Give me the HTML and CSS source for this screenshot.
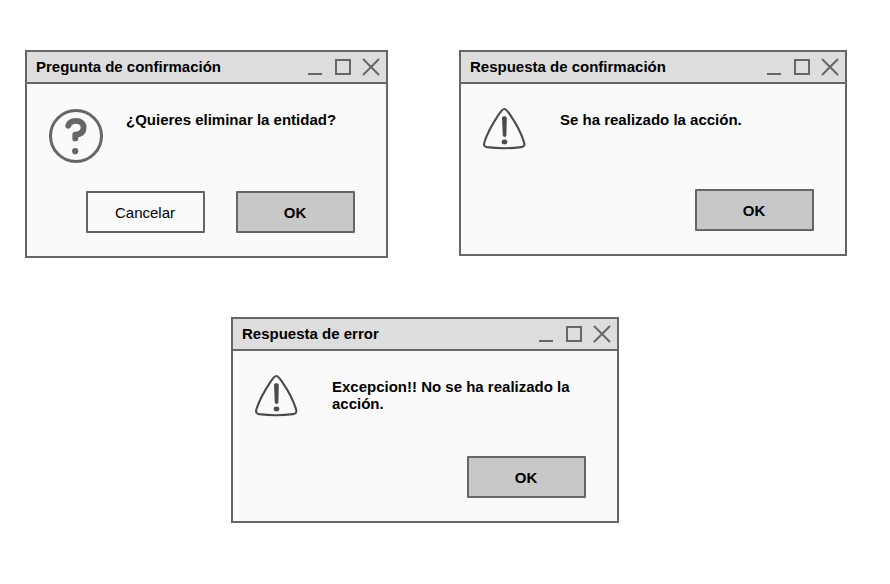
FILE: index.html
```html
<!DOCTYPE html>
<html lang="es">
<head>
<meta charset="utf-8">
<title>Diálogos</title>
<link rel="stylesheet" href="styles.css">
</head>
<body>
<svg width="0" height="0" class="defs" aria-hidden="true">
  <symbol id="controls" viewBox="0 0 76 30">
    <path d="M2 22h14M30 8h14v14h-14z" fill="none" stroke="#666" stroke-width="2"/>
    <path d="M57.5 7.5l15 15M72.5 7.5l-15 15" fill="none" stroke="#666" stroke-width="2" stroke-linecap="round"/>
  </symbol>
  <symbol id="warning" viewBox="0 0 44 44">
    <path d="M22.3 2C20.6 2 18.9 4.2 16.6 7.6C10.8 16.4 5.2 26.2 2.4 35.2C1.6 38.2 2 39.6 5 40.1C15 41.4 29 41.4 39 40.1C42 39.7 43 38.4 42.1 35.4C39.2 26 33.4 15.4 27.8 7.4C25.6 4.2 24 2 22.3 2Z" fill="none" stroke="#4b4b4b" stroke-width="2.1"/>
    <path d="M20 10.8C20 8.7 24.8 8.7 24.8 10.8L24.4 28.6C24.3 30.3 21 30.3 20.8 28.6Z" fill="#4b4b4b"/>
    <ellipse cx="22.5" cy="34.9" rx="2.8" ry="2.4" fill="#4b4b4b"/>
  </symbol>
</svg>
<main class="board">
  <section class="dialog confirm">
    <header class="titlebar"><h2>Pregunta de confirmación</h2><svg class="controls"><use href="#controls"/></svg></header>
    <div class="content">
      <svg class="question" viewBox="0 0 54 54">
        <circle cx="27" cy="27" r="25.5" fill="none" stroke="#666" stroke-width="3"/>
        <path d="M19.3 16.6C20.3 13.4 23 11.9 26.8 11.9C31.7 11.9 34.6 14.4 34.6 18.4C34.6 22.8 31.4 25.3 26.3 25.8V29.4" fill="none" stroke="#666" stroke-width="5.9" stroke-linecap="round" stroke-linejoin="round"/>
        <circle cx="26.2" cy="42.2" r="3.1" fill="#666"/>
      </svg>
      <p>¿Quieres eliminar la entidad?</p>
    </div>
    <footer class="actions"><button class="plain">Cancelar</button><button>OK</button></footer>
  </section>
  <section class="dialog success">
    <header class="titlebar"><h2>Respuesta de confirmación</h2><svg class="controls"><use href="#controls"/></svg></header>
    <div class="content">
      <svg class="warning"><use href="#warning"/></svg>
      <p>Se ha realizado la acción.</p>
    </div>
    <footer class="actions"><button>OK</button></footer>
  </section>
  <section class="dialog error">
    <header class="titlebar"><h2>Respuesta de error</h2><svg class="controls"><use href="#controls"/></svg></header>
    <div class="content">
      <svg class="warning"><use href="#warning"/></svg>
      <p>Excepcion!! No se ha realizado la acción.</p>
    </div>
    <footer class="actions"><button>OK</button></footer>
  </section>
</main>
</body>
</html>
```
FILE: styles.css
```css
* { box-sizing: border-box; }

body {
  margin: 0;
  background: #fff;
  color: #000;
  font: 15px/17px "Liberation Sans", Arial, sans-serif;
}

.defs { display: none; }

.board {
  display: grid;
  grid-template-columns: 363px 388px;
  grid-template-rows: 208px 206px;
  gap: 59px 71px;
  align-items: start;
  height: 584px;
  padding: 50px 0 0 25px;
}

.dialog {
  display: flex;
  flex-direction: column;
  width: 388px;
  height: 206px;
  border: 2px solid #666;
  background: #fafafa;
}

.confirm { width: 363px; height: 208px; }

.error {
  grid-column: 1 / -1;
  margin-left: 206px;
}

.titlebar {
  display: flex;
  align-items: center;
  justify-content: space-between;
  flex: none;
  height: 32px;
  padding: 0 4px 0 9px;
  border-bottom: 2px solid #666;
  background: #ddd;
}

h2 {
  margin: 0 0 2px;
  font-size: 15px;
  line-height: 17px;
}

.controls { width: 76px; height: 30px; }

.content {
  display: flex;
  align-items: flex-start;
  flex: 1;
  padding: 23px 20px 0 21px;
}

.content svg { flex: none; }

.warning {
  width: 44px;
  height: 44px;
  margin-right: 34px;
}

.question {
  width: 54px;
  height: 54px;
  margin: 2px 23px 0 1px;
}

p {
  margin: 4px 0 0;
  font-weight: bold;
}

.actions {
  display: flex;
  justify-content: flex-end;
  gap: 31px;
  padding: 0 31px 23px 0;
}

button {
  width: 119px;
  height: 42px;
  padding: 0 1px 0 0;
  border: 2px solid #666;
  border-radius: 1px;
  background: #c8c8c8;
  color: #000;
  font: bold 15px/17px "Liberation Sans", Arial, sans-serif;
}

.plain {
  background: #fafafa;
  font-weight: normal;
}
```
